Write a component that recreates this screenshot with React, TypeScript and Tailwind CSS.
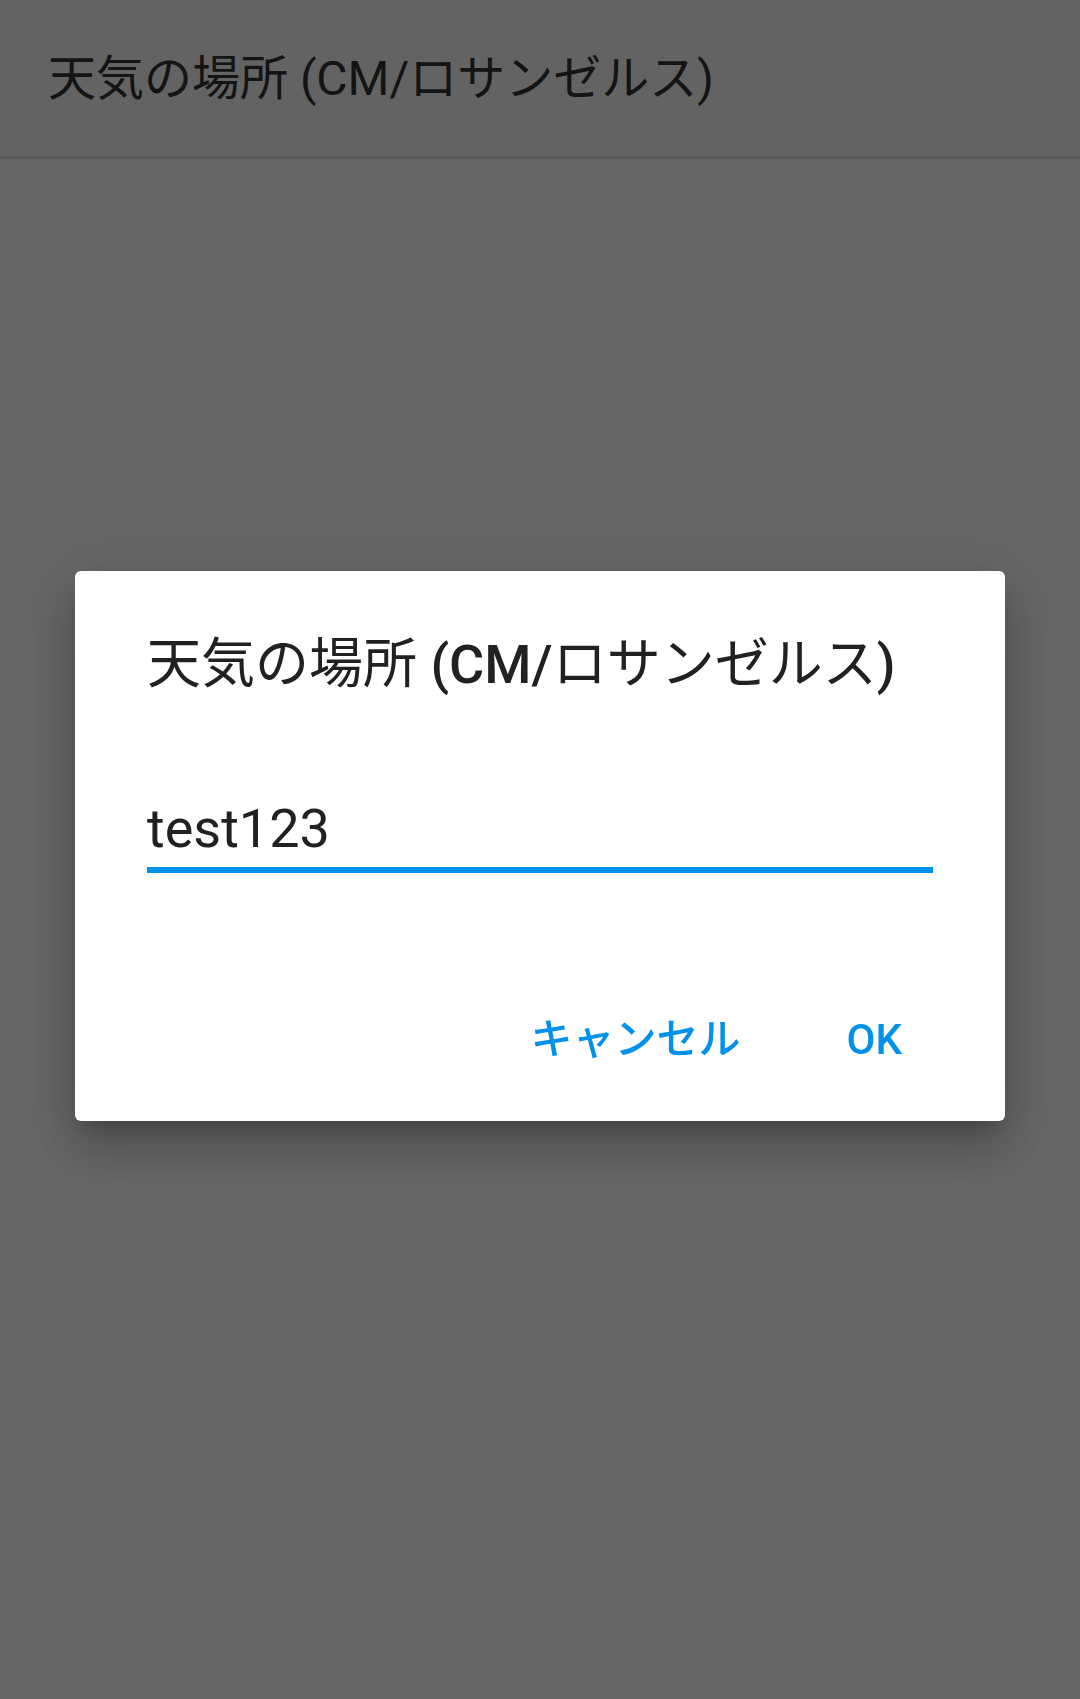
import React from "react";

const FONT = { fontFamily: 'Roboto, "Noto Sans CJK JP", sans-serif' };

function Toolbar() {
  return (
    <header className="h-[159px] border-b-[3px] border-[#dcdcdc] bg-[#f7f7f7] pl-[48px] pt-[51px]">
      <h1 className="text-[48px] leading-[56px] font-normal text-[#333333]">
        天気の場所 (CM/ロサンゼルス)
      </h1>
    </header>
  );
}

function LocationDialog() {
  return (
    <div className="fixed inset-0 flex items-center justify-center bg-black/60 pb-[7px]">
      <div
        role="dialog"
        className="w-[930px] rounded-[6px] bg-white shadow-[0_30px_50px_4px_rgba(0,0,0,0.14),0_12px_60px_10px_rgba(0,0,0,0.12),0_14px_20px_-8px_rgba(0,0,0,0.2)]"
      >
        <div className="px-[72px] pt-[62px]">
          <h2 className="text-[54px] leading-[64px] text-[#212121]">
            天気の場所 <span className="font-medium">(CM/</span>ロサンゼルス
            <span className="font-medium">)</span>
          </h2>
          <input
            type="text"
            defaultValue="test123"
            className="mt-[99px] block h-[77px] w-full border-b-[6px] border-[#0091ea] bg-transparent p-0 pb-[7px] text-[54px] leading-[64px] text-[#212121] outline-none"
            style={FONT}
          />
        </div>
        <div className="mt-[143px] flex justify-end gap-[58px] pb-[57px] pr-[79px]">
          <button className="px-[24px] text-[42px] leading-[48px] font-medium uppercase text-[#0091ea]">
            キャンセル
          </button>
          <button className="px-[24px] text-[42px] leading-[48px] font-medium uppercase text-[#0091ea]">
            ok
          </button>
        </div>
      </div>
    </div>
  );
}

export default function App() {
  return (
    <div className="relative min-h-screen bg-white" style={FONT}>
      <Toolbar />
      <main className="h-[1540px]" />
      <LocationDialog />
    </div>
  );
}
